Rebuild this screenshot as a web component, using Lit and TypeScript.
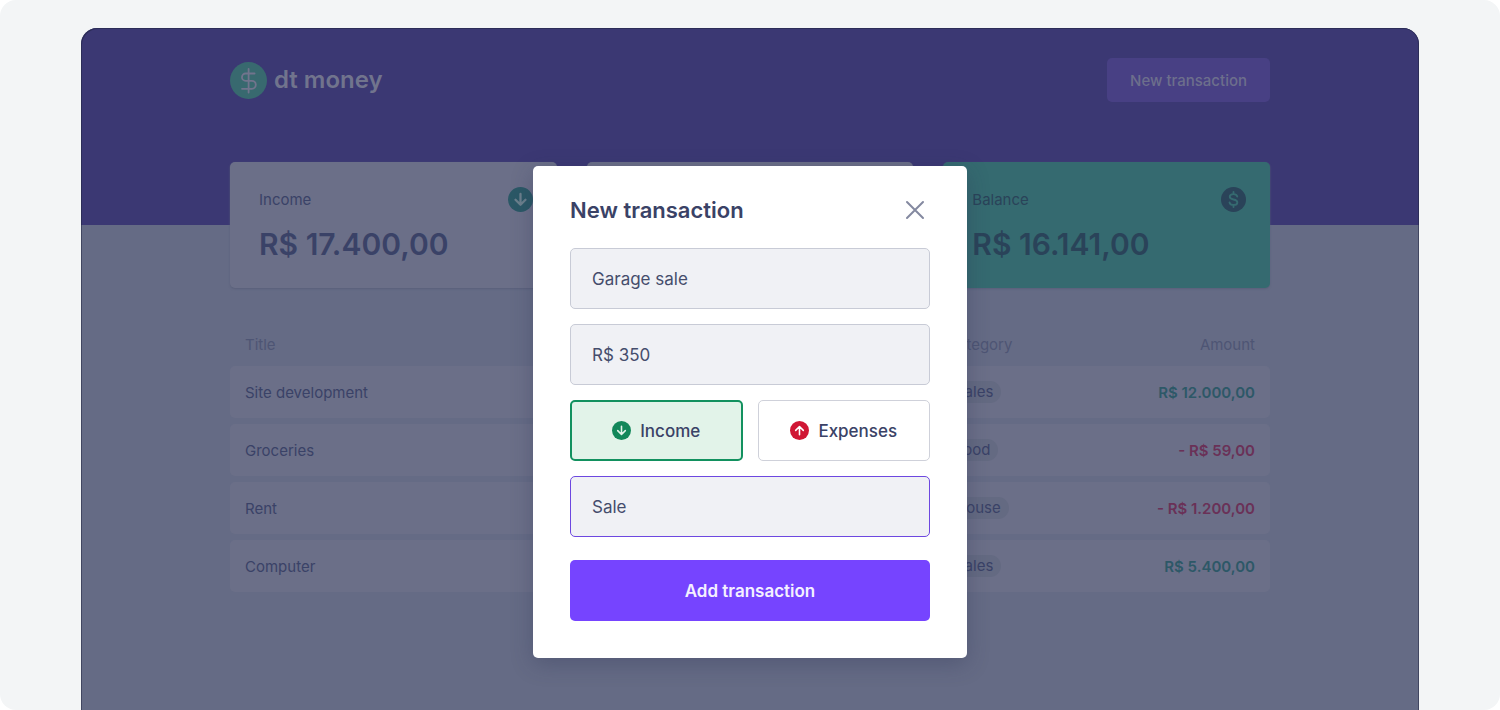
import { LitElement, html, css, svg } from "lit";
import { customElement, state } from "lit/decorators.js";

const DOWN = svg`<path d="M12 6.6v10.2M7.2 12.2l4.8 4.8 4.8-4.8"/>`;
const UP = svg`<path d="M12 17.4V7.2M7.2 11.8L12 7l4.8 4.8"/>`;
const DOLLAR = svg`<path d="M15.6 9.2c-.4-1.5-1.8-2.4-3.6-2.4-2 0-3.6 1-3.6 2.6 0 1.8 1.7 2.2 3.6 2.6s3.7.9 3.7 2.8c0 1.6-1.6 2.5-3.7 2.5-2 0-3.4-.9-3.8-2.5M12 4.8v2M12 17.3v2"/>`;

const ROWS = [
  { title: "Site development", category: "Sales", amount: "R$ 12.000,00", out: false },
  { title: "Groceries", category: "Food", amount: "- R$ 59,00", out: true },
  { title: "Rent", category: "House", amount: "- R$ 1.200,00", out: true },
  { title: "Computer", category: "Sales", amount: "R$ 5.400,00", out: false },
];

@customElement("app-root")
export class AppRoot extends LitElement {
  @state() private kind: "income" | "expenses" = "income";

  static styles = css`
    :host {
      display: block;
      background: #fff;
      font-family: Inter, "Open Sans", sans-serif;
      color: #3a4266;
    }
    * {
      box-sizing: border-box;
    }
    button,
    input {
      font: inherit;
      color: inherit;
      margin: 0;
    }
    button {
      cursor: pointer;
    }
    .stage {
      min-height: 100vh;
      display: flex;
      padding: 28px 81px 0;
      background: #f3f5f6;
      border-radius: 16px;
    }
    .screen {
      position: relative;
      flex: 1;
      min-width: 0;
      border-radius: 16px 16px 0 0;
      background: #656b85;
      overflow: hidden;
    }
    .wrap {
      max-width: 1040px;
      margin: 0 auto;
    }
    .top {
      background: #3b3873;
      padding: 30px 0 123px;
    }
    .bar {
      display: flex;
      justify-content: space-between;
      align-items: center;
    }
    .logo {
      display: flex;
      align-items: center;
      gap: 7px;
      font-size: 24px;
      line-height: 36px;
      font-weight: 600;
      color: #71748d;
    }
    .logo svg {
      width: 37px;
      height: 37px;
    }
    .new {
      height: 44px;
      padding: 0 23px;
      border: 0;
      border-radius: 5px;
      background: #484084;
      color: #6d6f8c;
      font-size: 15px;
      font-weight: 500;
    }
    .cards {
      display: grid;
      grid-template-columns: repeat(3, 1fr);
      gap: 30px;
      margin-top: -63px;
    }
    .card {
      min-height: 126px;
      padding: 25px 24px 24px 29px;
      border-radius: 5px;
      background: #6b6f88;
      box-shadow: 0 1px 2px #5a607a;
      color: #3a4267;
    }
    .card.total {
      background: #356a70;
      color: #2a4359;
    }
    .label {
      display: flex;
      justify-content: space-between;
      align-items: center;
      height: 25px;
      margin-bottom: 12px;
      font-size: 15px;
    }
    .label svg {
      width: 25px;
      height: 25px;
    }
    .value {
      font-size: 30px;
      line-height: 40px;
      font-weight: 600;
    }
    .list {
      width: 100%;
      margin-top: 34px;
      border-collapse: separate;
      border-spacing: 0 6px;
      table-layout: fixed;
      font-size: 15px;
      color: #3a4267;
    }
    .list th {
      height: 32px;
      padding: 0 15px;
      text-align: left;
      font-weight: 400;
      color: #4e5574;
    }
    .list th.num,
    .list td.num {
      text-align: right;
    }
    .list td {
      height: 52px;
      padding: 0 15px;
      background: #6b6f88;
    }
    .list td:first-child {
      border-radius: 5px 0 0 5px;
    }
    .list td:last-child {
      border-radius: 0 5px 5px 0;
    }
    .list th.main {
      width: 67.5%;
    }
    .list td.num {
      font-weight: 600;
      color: #2d5867;
    }
    .list td.num.out {
      color: #6a3157;
    }
    .tag {
      display: inline-block;
      vertical-align: middle;
      padding: 0 8px;
      line-height: 22px;
      border-radius: 11px;
      background: #646a82;
    }
    .overlay {
      position: absolute;
      inset: 0;
      display: flex;
      justify-content: center;
      align-items: flex-start;
      padding-top: 138px;
      border-radius: 16px 16px 0 0;
      box-shadow: inset 1px 1px 0 rgba(30, 34, 62, 0.5), inset -1px 0 0 rgba(30, 34, 62, 0.5);
    }
    .modal {
      width: 434px;
      padding: 29px 37px 37px;
      border-radius: 5px;
      background: #fff;
      box-shadow: 0 6px 22px rgba(40, 48, 80, 0.3);
    }
    .head {
      display: flex;
      justify-content: space-between;
      align-items: center;
      margin-bottom: 23px;
    }
    .head h2 {
      margin: 0;
      font-size: 22px;
      line-height: 30px;
      font-weight: 600;
    }
    .close {
      display: flex;
      padding: 0;
      border: 0;
      background: none;
    }
    .close svg {
      width: 30px;
      height: 30px;
    }
    form {
      display: grid;
      gap: 15px;
    }
    .field,
    .kind,
    .add {
      height: 61px;
      border-radius: 5px;
      font-size: 17px;
    }
    .field {
      width: 100%;
      padding: 0 21px;
      border: 1px solid #c8cbd6;
      background: #f0f1f5;
      color: #454d6c;
      outline: 0;
    }
    .field.active {
      border-color: #6d48e0;
    }
    .kinds {
      display: grid;
      grid-template-columns: 1fr 1fr;
      gap: 15px;
    }
    .kind {
      display: flex;
      align-items: center;
      justify-content: center;
      gap: 9px;
      border: 1px solid #cfd1da;
      background: #fff;
      font-weight: 500;
    }
    .kind.on {
      border: 2px solid #12915f;
      background: #e2f3e9;
    }
    .kind svg {
      width: 19px;
      height: 19px;
    }
    .add {
      margin-top: 8px;
      border: 0;
      background: #7644ff;
      color: #f4f0ff;
      font-weight: 600;
    }
  `;

  private disc(fill: string, stroke: string, glyph: unknown, width = 2) {
    return html`<svg viewBox="0 0 24 24" fill="none" aria-hidden="true">
      <circle cx="12" cy="12" r="12" fill=${fill}></circle>
      <g stroke=${stroke} stroke-width=${width} stroke-linecap="round" stroke-linejoin="round">${glyph}</g>
    </svg>`;
  }

  render() {
    return html`
      <div class="stage">
        <div class="screen">
          <header class="top">
            <div class="wrap bar">
              <div class="logo">
                <svg viewBox="0 0 37 37" fill="none" aria-hidden="true">
                  <circle cx="18.5" cy="18.5" r="18.5" fill="#38696f"></circle>
                  <path
                    d="M24.6 11.5h-9a3.65 3.65 0 0 0 0 7.3h6.2a4 4 0 0 1 0 8H12M18.6 6.8v23.8"
                    stroke="#71748d" stroke-width="1.8" stroke-linecap="round"
                  ></path>
                </svg>
                <span>dt money</span>
              </div>
              <button class="new" type="button">New transaction</button>
            </div>
          </header>

          <main class="wrap">
            <section class="cards">
              <article class="card">
                <div class="label"><span>Income</span>${this.disc("#2b5866", "#6b7f8c", DOWN, 2.2)}</div>
                <div class="value">R$ 17.400,00</div>
              </article>
              <article class="card"></article>
              <article class="card total">
                <div class="label"><span>Balance</span>${this.disc("#2a4359", "#356a70", DOLLAR, 1.8)}</div>
                <div class="value">R$ 16.141,00</div>
              </article>
            </section>

            <table class="list">
              <thead>
                <tr>
                  <th class="main">Title</th>
                  <th>Category</th>
                  <th class="num">Amount</th>
                </tr>
              </thead>
              <tbody>
                ${ROWS.map(
                  (r) => html`<tr>
                    <td>${r.title}</td>
                    <td><span class="tag">${r.category}</span></td>
                    <td class="num ${r.out ? "out" : ""}">${r.amount}</td>
                  </tr>`
                )}
              </tbody>
            </table>
          </main>

          <div class="overlay">
            <div class="modal" role="dialog" aria-labelledby="modal-title">
              <div class="head">
                <h2 id="modal-title">New transaction</h2>
                <button class="close" type="button" aria-label="Close">
                  <svg viewBox="0 0 30 30" fill="none" stroke="#8489a0" stroke-width="2" stroke-linecap="round" aria-hidden="true">
                    <path d="M7 7l16 16M23 7L7 23"></path>
                  </svg>
                </button>
              </div>
              <form @submit=${(e: Event) => e.preventDefault()}>
                <input class="field" aria-label="Title" .value=${"Garage sale"} />
                <input class="field" aria-label="Price" .value=${"R$ 350"} />
                <div class="kinds">
                  <button
                    type="button"
                    class="kind ${this.kind === "income" ? "on" : ""}"
                    aria-pressed=${this.kind === "income"}
                    @click=${() => (this.kind = "income")}
                  >
                    ${this.disc("#12875a", "#e2f3e9", DOWN)}<span>Income</span>
                  </button>
                  <button
                    type="button"
                    class="kind ${this.kind === "expenses" ? "on" : ""}"
                    aria-pressed=${this.kind === "expenses"}
                    @click=${() => (this.kind = "expenses")}
                  >
                    ${this.disc("#d01634", "#fff", UP)}<span>Expenses</span>
                  </button>
                </div>
                <input class="field active" aria-label="Category" .value=${"Sale"} />
                <button class="add" type="submit">Add transaction</button>
              </form>
            </div>
          </div>
        </div>
      </div>
    `;
  }
}
